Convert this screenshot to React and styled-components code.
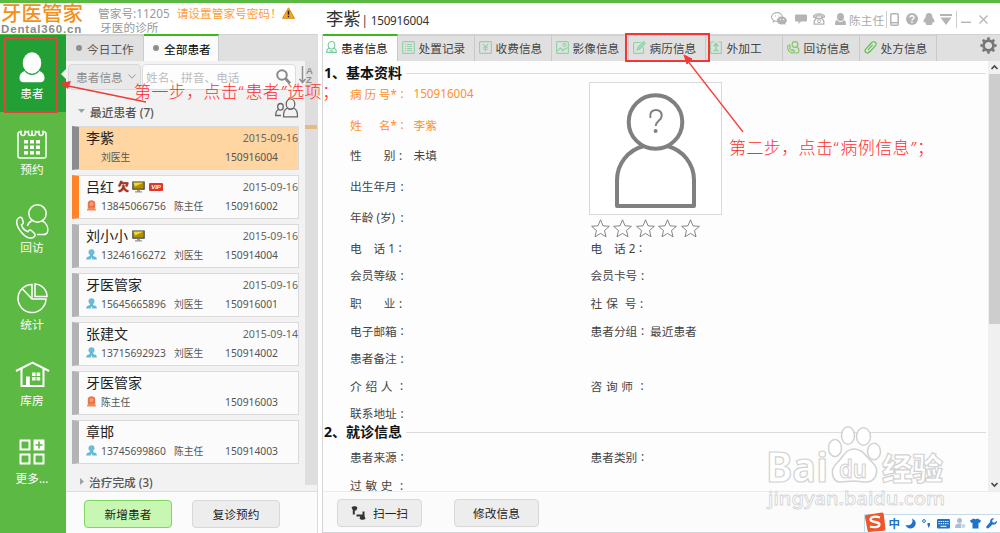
import React from 'react';
import styled, { createGlobalStyle } from 'styled-components';

const sans = `'Noto Sans', 'Noto Sans CJK SC', sans-serif`;

const GlobalStyle = createGlobalStyle`
  * { box-sizing: border-box; }
  body { margin: 0; overflow: hidden; font-family: ${sans}; font-size: 11.7px; color: #444; }
  svg { display: block; flex: none; overflow: visible; }
`;

const Window = styled.div`
  position: relative;
  width: 1000px;
  height: 533px;
  display: flex;
  flex-direction: column;
  overflow: hidden;
  background: #fff;
  border-top: 3px solid #5cb943;
`;

const Header = styled.header`
  height: 31px;
  display: flex;
  flex: none;
`;
const Brand = styled.div`
  width: 98px;
  padding-left: 1px;
  white-space: nowrap;
`;
const BrandName = styled.div`
  height: 20px;
  line-height: 20px;
  font-size: 20.5px;
  font-weight: 500;
  color: #f39019;
`;
const BrandSite = styled.div`
  font: bold 11.5px/12px 'Liberation Sans', sans-serif;
  letter-spacing: 0.85px;
  color: #8b8b8b;
`;
const Account = styled.div`
  width: 228px;
  color: #999;
  line-height: 14px;
  padding-top: 3px;
  white-space: nowrap;
`;
const AccountRow = styled.div`
  display: flex;
  height: 14px;
  padding-left: ${p => p.$indent || 0}px;
`;
const Warning = styled.span`
  margin: 0 0 0 7px;
  color: #ff9c38;
`;
const PatientTitle = styled.div`
  flex: 1;
  display: flex;
  align-items: center;
  color: #333;
  white-space: pre;
`;
const TitleName = styled.span`
  font-size: 17.3px;
  line-height: 30px;
  margin-top: 1px;
`;
const TitleId = styled.span`
  margin: 3px 0 0 1px;
  letter-spacing: -0.2px;
`;
const HeaderTools = styled.div`
  width: 229px;
  display: flex;
  align-items: center;
  color: #aaa;
  padding-top: 1px;
`;
const Tool = styled.span`
  display: flex;
  width: ${p => p.$w}px;
  height: 17px;
  padding-left: ${p => p.$pl || 0}px;
  align-items: center;
  white-space: nowrap;
  border-right: ${p => (p.$line ? '1px solid #ccc' : 'none')};
`;

const Body = styled.div`
  flex: 1;
  display: flex;
  min-height: 0;
`;

const Sidebar = styled.nav`
  width: 66px;
  flex: none;
  background: #5cb943;
  padding-top: 1px;
`;
const NavItem = styled.div`
  position: relative;
  height: 77px;
  padding: ${p => p.$pad}px 2px 0 0;
  display: flex;
  flex-direction: column;
  align-items: center;
  color: #fff;
  background: ${p => (p.$active ? '#22a035' : 'transparent')};
`;
const NavIcon = styled.div`
  height: 36px;
  display: flex;
  align-items: center;
`;
const NavLabel = styled.div`
  line-height: 16px;
`;
const NavPointer = styled.i`
  position: absolute;
  right: 0;
  top: 34px;
  border: 5px solid transparent;
  border-right-color: #f4f4f4;
  border-left: 0;
`;

const ListPanel = styled.aside`
  width: 252px;
  flex: none;
  display: flex;
  flex-direction: column;
  background: #f2f2f2;
  border-right: 1px solid #ddd;
`;
const TabBar = styled.div`
  height: 27px;
  flex: none;
  display: flex;
  background: #e0e0e0;
  border-top: 1px solid #d2d2d2;
`;
const ListTab = styled.div`
  width: ${p => p.$w}px;
  display: flex;
  align-items: center;
  gap: 5px;
  padding-left: ${p => (p.$active ? 9 : 10)}px;
  margin-top: -1px;
  line-height: 14px;
  color: ${p => (p.$active ? '#000' : '#555')};
  background: ${p => (p.$active ? '#fbfbfb' : 'transparent')};
  border-top: 2px solid ${p => (p.$active ? '#3cb81b' : '#d2d2d2')};
  border-right: 1px solid #ccc;
`;
const Dot = styled.i`
  width: 6px;
  height: 6px;
  margin-top: -2px;
  border-radius: 50%;
  background: #8e8e8e;
`;
const ListArea = styled.div`
  flex: 1;
  display: flex;
  min-height: 0;
`;
const ListMain = styled.div`
  flex: 1;
  overflow: hidden;
`;
const ListTrack = styled.div`
  position: relative;
  width: 12px;
  height: 424px;
  background: #dedede;
`;
const TrackMark = styled.i`
  display: block;
  height: 4px;
  margin-top: 64px;
  background: #e8b981;
`;
const SearchRow = styled.div`
  display: flex;
  height: 36px;
  padding: 3px 0 6px 2px;
`;
const FieldSelect = styled.div`
  width: 73px;
  height: 26px;
  display: flex;
  align-items: center;
  justify-content: space-between;
  padding: 0 4px 1px 7px;
  color: #8c8c8c;
  background: #e9e9e9;
  border: 1px solid #d8d8d8;
  border-radius: 4px;
`;
const SearchInput = styled.div`
  width: 154px;
  height: 26px;
  margin-left: 1px;
  display: flex;
  align-items: center;
  justify-content: space-between;
  padding: 0 4px 1px 3px;
  color: #bcbcbc;
  background: #fdfdfd;
  border: 1px solid #dcdcdc;
  border-radius: 4px;
`;
const SortMark = styled.div`
  position: absolute;
  left: -6px;
  top: 5px;
  display: flex;
  color: #8f8f8f;
  font: bold 9.5px/9px 'Liberation Sans', sans-serif;
`;
const GroupTitle = styled.div`
  display: flex;
  align-items: center;
  height: ${p => p.$h}px;
  padding: 0 0 ${p => p.$pb || 0}px ${p => p.$pl}px;
  gap: 5px;
  font-weight: 500;
  font-size: 11.7px;
  color: #555;
`;
const GroupIcon = styled.div`
  margin: -7px 7px 0 auto;
`;
const Cards = styled.div`
  display: flex;
  flex-direction: column;
  gap: 5px;
  padding: 0 6px 0 6px;
`;
const Card = styled.div`
  height: 44px;
  border: 1px solid #dadada;
  border-left: 7px solid ${p => p.$bar};
  background: ${p => (p.$selected ? '#ffd6a1' : '#fbfbfb')};
  padding: 1px 0 0 7px;
`;
const CardTop = styled.div`
  display: flex;
  align-items: center;
  height: 20px;
  gap: 4px;
`;
const CardName = styled.span`
  font-size: 14px;
  line-height: 20px;
  color: #222;
`;
const CardDate = styled.span`
  margin: -1px 0 0 auto;
  font-size: 10.6px;
  color: #666;
`;
const CardBottom = styled.div`
  display: grid;
  grid-template-columns: 15px ${p => (p.$phone ? '73px' : '0')} 1fr 73px;
  align-items: center;
  height: 19px;
  margin-top: -1px;
  font-size: 10.3px;
  color: #555;
`;
const Doctor = styled.span`
  font-size: 9.8px;
  white-space: nowrap;
`;
const ListFooter = styled.div`
  height: 42px;
  flex: none;
  display: flex;
  gap: 20px;
  padding: 8px 0 0 18px;
  background: #fbfbfb;
  border-top: 1px solid #ddd;
`;
const Button = styled.div`
  width: ${p => p.$w}px;
  height: 28px;
  display: flex;
  align-items: center;
  justify-content: center;
  gap: 7px;
  padding-bottom: 1px;
  border-radius: 4px;
  color: #222;
  background: ${p => (p.$primary ? '#c8f7b3' : '#ededed')};
  border: 1px solid ${p => (p.$primary ? '#7fd663' : '#d8d8d8')};
`;

const DetailPanel = styled.main`
  flex: 1;
  display: flex;
  flex-direction: column;
  margin-left: 4px;
  border-left: 1px solid #d6d6d6;
  border-bottom: 1px solid #cfd6d6;
  background: #fdfdfd;
`;
const DetailTab = styled.div`
  width: ${p => (p.$active ? 75 : 77)}px;
  display: flex;
  align-items: center;
  gap: ${p => (p.$active ? 5 : 4)}px;
  padding: 0 0 2px ${p => (p.$active ? 3 : 4)}px;
  margin-top: -1px;
  color: ${p => (p.$active ? '#222' : '#444')};
  background: ${p => (p.$active ? '#fdfdfd' : 'transparent')};
  border-top: 2px solid ${p => (p.$active ? '#3cb81b' : '#d2d2d2')};
  border-right: 1px solid #c9c9c9;
  white-space: nowrap;
`;
const TabText = styled.span`
  margin-left: ${p => (p.$first ? -1 : -0.5)}px;
`;
const Settings = styled.div`
  margin: 2px 3px 0 auto;
`;
const DetailBody = styled.div`
  flex: 1;
  min-height: 0;
  display: flex;
  overflow: hidden;
`;
const Form = styled.div`
  flex: 1;
  overflow: hidden;
`;
const SectionTitle = styled.h2`
  display: flex;
  align-items: center;
  gap: 4px;
  margin: 0 2px ${p => p.$gap}px 1px;
  height: ${p => p.$h}px;
  font-size: 14px;
  line-height: 12px;
  font-weight: 700;
  color: #111;
  white-space: nowrap;
  &::after { content: ''; flex: 1; height: 1px; background: #dcdcdc; }
`;
const SectionText = styled.span`
  margin-top: -1px;
`;
const TopBlock = styled.div`
  display: flex;
  height: 155.6px;
`;
const TopFields = styled.div`
  width: 238px;
`;
const Row = styled.div`
  display: flex;
  height: ${p => p.$h}px;
`;
const Field = styled.div`
  width: ${p => p.$w}px;
  height: 100%;
  padding-left: 27px;
  display: flex;
  align-items: center;
  color: ${p => (p.$accent ? '#ff8f2b' : '#444')};
`;
const FieldLabel = styled.span`
  width: ${p => p.$w}px;
  padding-right: ${p => p.$pad || 0}px;
  display: flex;
  justify-content: space-between;
  white-space: pre;
`;
const Colon = styled.span`
  width: ${p => 63.5 - p.$used}px;
  padding-left: 3.5px;
`;
const PhotoColumn = styled.div`
  padding: 4px 0 0 28px;
`;
const Photo = styled.div`
  width: 133px;
  height: 133px;
  border: 1px solid #d8d8d8;
  background: #fff;
`;
const Stars = styled.div`
  display: flex;
  gap: 3.5px;
  padding: 4px 0 0 1.5px;
`;
const ScrollBar = styled.div`
  width: 12px;
  display: flex;
  flex-direction: column;
  align-items: center;
  background: #f0f0f0;
`;
const ScrollArrow = styled.div`
  height: 13px;
  display: flex;
  align-items: center;
`;
const ScrollThumb = styled.div`
  width: 11px;
  height: 250px;
  margin-bottom: auto;
  background: #cdcdcd;
`;
const DetailFooter = styled.div`
  height: 41px;
  flex: none;
  display: flex;
  gap: 32px;
  padding: 7px 0 0 14px;
  border-top: 1px solid #ececec;
  background: #fbfbfb;
`;

const HighlightBox = styled.div`
  position: absolute;
  left: ${p => p.$x}px;
  top: ${p => p.$y}px;
  width: ${p => p.$w}px;
  height: ${p => p.$h}px;
  border: 2px solid ${p => p.$color};
`;
const Arrows = styled.svg`
  position: absolute;
  left: 0;
  top: -3px;
`;
const Note = styled.div`
  position: absolute;
  left: ${p => p.$x}px;
  top: ${p => p.$y}px;
  font: 300 17px/22px 'Noto Sans CJK SC', sans-serif;
  letter-spacing: 0.4px;
  color: #ff2e2e;
  white-space: nowrap;
`;
const Quote = styled.span`
  display: inline-block;
  width: 7px;
  letter-spacing: 0;
  font-family: 'Noto Sans', sans-serif;
  font-style: ${p => (p.$close ? 'italic' : 'normal')};
`;
const Watermark = styled.svg`
  position: absolute;
  left: 762px;
  top: 419px;
`;
const InputBar = styled.div`
  position: absolute;
  left: 864px;
  top: 511px;
  width: 136px;
  height: 19px;
  display: flex;
  align-items: center;
  padding-left: 23.5px;
  gap: 4.9px;
  background: #fdfeff;
  border: 1px solid #c6dbe8;
  border-right: 0;
  color: #1f74c9;
  font-size: 11.5px;
  line-height: 15px;
  font-weight: 700;
`;
const ImeLogo = styled.svg`
  position: absolute;
  left: -1px;
  top: -3px;
`;

const HeadOutline = ({ size = 11, color = '#74c99a' }) => (
  <svg width={size} height={size * 1.1} viewBox="0 0 11 12" fill="none" stroke={color} strokeWidth="1.1">
    <ellipse cx="5.5" cy="4.2" rx="3.3" ry="3.7" />
    <path d="M3.2 7.2C.8 8 .5 9.5.8 11.3h9.4c.3-1.8 0-3.3-2.4-4.1M3.5 9.3c1.3.8 2.700.8 4 0" />
  </svg>
);

const navIcons = {
  patient: (
    <svg width="26" height="31" viewBox="0 0 26 31" fill="#fff">
      <ellipse cx="13" cy="11" rx="9.3" ry="10.700" />
      <path d="M5.500 19C2 20.200.5 23 .5 26c0 3 1.800 4.300 4 4.300h17c2.200 0 4-1.300 4-4.300 0-3-1.500-5.800-5-7-4 5.200-11 5.200-15 0z" />
    </svg>
  ),
  calendar: (
    <svg width="30" height="31" viewBox="0 0 30 31" fill="none" stroke="#fff" strokeWidth="1.5">
      <path d="M4 4H2.500Q1 4 1 6v22q0 2 2 2h24q2 0 2-2V6q0-2-1.500-2H26" />
      <path d="M4 2.500v4q2 2 4 0v-4M8 4h3.500M11.500 2.500v4q1.800 2 3.500 0v-4M15 2.500v4q1.800 2 3.500 0v-4M18.500 4H22M22 2.500v4q2 2 4 0v-4" />
      <g fill="#fff" stroke="none">
        {[12, 17.5, 23].map(y => [7, 13, 19].map(x => <rect key={`${x}-${y}`} x={x} y={y} width="4" height="3.500" />))}
      </g>
    </svg>
  ),
  callback: (
    <svg width="33" height="35" viewBox="0 0 33 35" fill="none" stroke="#fff" strokeWidth="1.5">
      <circle cx="21.500" cy="9.500" r="8.700" />
      <path d="M15.500 17c-2 1-3.500 2.500-4 5M26.500 17c4 2 6 6.500 5 11-.5 2-2.500 2.500-4.500 2.500h-6" />
      <path d="M2.500 14c1.500-1 3-1 3.700.5l1 3.500c.3 1.500-.3 2.300-1.700 2.800 1 4 3.500 6 6.500 7 1.500-2.300 2.500-2 4-.8l2.500 2.500c1.300 1.500.5 3-1.500 4-3 1.300-7.500-.5-11-4.500C2 24.500.5 21 .7 17.500.8 16 1.500 14.700 2.500 14z" />
    </svg>
  ),
  stats: (
    <svg width="31" height="31" viewBox="0 0 31 31" fill="none" stroke="#fff" strokeWidth="1.500">
      <path d="M15 1.500A14 14 0 1 0 29 16H15zM15 16L5.500 6M18 1v12.500h12C30 7 25 1.500 18 1z" />
    </svg>
  ),
  storage: (
    <svg width="35" height="26" viewBox="0 0 35 26" fill="none" stroke="#fff" strokeWidth="2">
      <path d="M1 10L17.500 1.500 34 10M6.500 8v17h22V8" />
      <path d="M11 15.500h3.800V25H11zM17 11.500h3.600v3.400H17zM21.600 11.500h3.600v3.400h-3.600zM17 16h3.600v3.400H17zM21.600 16h3.600v3.400h-3.600z" fill="#fff" stroke="none" />
    </svg>
  ),
  more: (
    <svg width="26" height="26" viewBox="0 0 26 26" fill="none" stroke="#fff" strokeWidth="2">
      <path d="M1.500 1.500h9v9h-9zM1.500 15.500h9v9h-9zM15.500 15.500h9v9h-9z" />
      <path d="M14.500.500h11v11h-11z" fill="#fff" stroke="none" />
      <path d="M20 2.500v7M16.500 6h7" stroke="#5cb943" strokeWidth="1.600" />
    </svg>
  ),
};

const navItems = [
  ['patient', '患者', 14], ['calendar', '预约', 13], ['callback', '回访', 14],
  ['stats', '统计', 14], ['storage', '库房', 13], ['more', '更多...', 14],
];

const patients = [
  { name: '李紫', date: '2015-09-16', doctor: '刘医生', id: '150916004', bar: '#8c8c8c', selected: true },
  { name: '吕红', date: '2015-09-16', phone: '13845066756', doctor: '陈主任', id: '150916002', bar: '#ff8427', who: 'f', debt: true, tv: true, vip: true },
  { name: '刘小小', date: '2015-09-16', phone: '13246166272', doctor: '刘医生', id: '150914004', who: 'm', tv: true },
  { name: '牙医管家', date: '2015-09-16', phone: '15645665896', doctor: '刘医生', id: '150916001', who: 'm' },
  { name: '张建文', date: '2015-09-14', phone: '13715692923', doctor: '刘医生', id: '150914002', who: 'm' },
  { name: '牙医管家', doctor: '陈主任', id: '150916003', who: 'f' },
  { name: '章邯', phone: '13745699860', doctor: '陈主任', id: '150914003', who: 'm' },
];

const PersonIcon = ({ who }) => {
  if (who === 'm') {
    return (
      <svg width="11" height="11" viewBox="0 0 11 11">
        <circle cx="5.500" cy="3.200" r="3" fill="#6dbcd9" />
        <path d="M4.200 5h2.600l.4 2 3 1.200.8 2.300H6.300L5.500 8l-.8 2.500H0l.8-2.300 3-1.200z" fill="#63b9d8" />
      </svg>
    );
  }
  if (who === 'f') {
    return (
      <svg width="11" height="11" viewBox="0 0 11 11">
        <path d="M1.800 8V3.500C1.800-.8 9.200-.8 9.200 3.500V8z" fill="#e9744a" />
        <path d="M1 10.500c0-2 1-3 4.500-3s4.500 1 4.500 3z" fill="#f08a5e" />
        <circle cx="5.500" cy="4" r="2" fill="#f79a76" />
      </svg>
    );
  }
  return <span />;
};

const DebtBadge = styled.span`
  margin-right: -1px;
  font-size: 11px;
  line-height: 14px;
  font-weight: 900;
  color: #b5301a;
  text-shadow: 0 0 1px #5c1408;
`;
const VipBadge = styled.span`
  width: 14px;
  height: 8px;
  margin-top: -1px;
  border-radius: 1px;
  background: #e0372b;
  color: #fff;
  font: italic bold 6px/8px 'Liberation Sans', sans-serif;
  text-align: center;
`;
const Monitor = () => (
  <svg width="13" height="12" viewBox="0 0 13 12">
    <rect x=".3" y=".5" width="12.400" height="8.200" fill="#333" />
    <path d="M1.300 1.500h10.400v6.200H1.300z" fill="#b08f00" />
    <path d="M1.300 1.500h10.400L3 5.500z" fill="#f0d838" />
    <path d="M5 8.700h3v1.500h2V11.500H3v-1.300h2z" fill="#999" />
  </svg>
);

const g = { width: 13, height: 13, viewBox: '0 0 13 13', fill: 'none', stroke: '#8fd3a9', strokeWidth: 1.100 };
const tabs = [
  ['患者信息', <HeadOutline key="i" />],
  ['处置记录', <svg key="i" {...g}><rect x=".6" y=".6" width="11.800" height="11.800" rx="1" /><path d="M3 3.500h1M5 3.500h5M3 5.500h1M5 5.500h5M3 7.500h1M5 7.500h5M3 9.500h1M5 9.500h5" /></svg>],
  ['收费信息', <svg key="i" {...g}><rect x=".6" y=".6" width="11.800" height="11.800" rx="1" /><path d="M4 2.800l2.500 3 2.500-3M6.500 5.800V10.500M4 6.300h5M4 8.300h5" /></svg>],
  ['影像信息', <svg key="i" {...g}><rect x=".6" y=".6" width="11.800" height="11.800" rx="1" /><path d="M1 10l3.500-3 2.500 2 5-2.500M4.500 7l3 3.500" /><circle cx="8.500" cy="4" r="1.500" /></svg>],
  ['病历信息', <svg key="i" {...g}><path d="M8 1.500H1.500q-.9 0-.9.9v9q0 1 .9 1h8q1 0 1-1V6" /><path d="M4 9l.6-2.300L10.500.8l1.700 1.600-5.900 6z" fill="#a5dcb6" /></svg>],
  ['外加工', <svg key="i" {...g}><path d="M4.500 1H.6v11.400h10.800V1H8.500" /><path d="M6 9V3M3.500 5.300L6 2.500l2.500 2.800M3.500 9.500h5" strokeWidth="1.500" /></svg>],
  ['回访信息', <svg key="i" {...g} stroke="#80c765"><circle cx="8" cy="3.500" r="2.900" /><path d="M10 6c2.500 1.500 2.500 5 1 6H7.500" /><path d="M1 4.500l1.500-.5.800 2-.8 1c.5 1.500 1.500 2 2.500 2.500l1-.7 1.700 1.700c-1 2-3.500 1.700-5.200.2C.8 9 .2 6.500 1 4.500z" /></svg>],
  ['处方信息', <svg key="i" {...g} stroke="#5fc34d" strokeWidth="1.200"><path d="M4 8.800l4.600-5M5.500 11.200C3.500 13.300-.3 11 1.500 8.300L7.300 2C9.500-.6 13.500 1.500 11.700 4.300zM5.500 11.200l-1-.9" /></svg>],
];

const topRows = [
  { parts: ['病', '历', '号*'], w: 47, value: '150916004', accent: true },
  { parts: ['姓', '名*'], w: 47, value: '李紫', accent: true },
  { parts: ['性', '别'], w: 45.5, value: '未填' },
  { parts: ['出生年月'], w: 47 },
  { parts: ['年龄 (岁)'], w: 47 },
];
const pairRows = [
  [{ parts: ['电', '话 1'], w: 45 }, { parts: ['电', '话 2'], w: 45 }],
  [{ parts: ['会员等级'], w: 47 }, { parts: ['会员卡号'], w: 47 }],
  [{ parts: ['职', '业'], w: 45.5 }, { parts: ['社', '保', ' 号'], w: 46 }],
  [{ parts: ['电子邮箱'], w: 47 }, { parts: ['患者分组'], w: 47, value: '最近患者' }],
  [{ parts: ['患者备注'], w: 47 }],
  [{ parts: ['介', '绍', '人'], w: 42.5, pad: 4 }, { parts: ['咨', '询', '师'], w: 42.5, pad: 4 }],
  [{ parts: ['联系地址'], w: 47 }],
];
const visitRows = [
  [{ parts: ['患者来源'], w: 47 }, { parts: ['患者类别'], w: 47 }],
  [{ parts: ['过', '敏', '史'], w: 42.5, pad: 4 }],
];

const FormField = ({ field, width, second }) => {
  const labelWidth = field.w + (field.pad || 0);
  return (
    <Field $w={width} $accent={field.accent}>
      <FieldLabel $w={labelWidth} $pad={field.pad}>
        {field.parts.map(p => <span key={p}>{p}</span>)}
      </FieldLabel>
      <Colon $used={labelWidth + (second ? 4 : 0)}>:</Colon>
      <span>{field.value}</span>
    </Field>
  );
};

const PairRow = ({ pair, h }) => (
  <Row $h={h}>
    {pair.map((f, i) => <FormField key={i} field={f} width={i ? 300 : 240.500} second={i > 0} />)}
  </Row>
);

export default function App() {
  return (
    <Window>
      <GlobalStyle />
      <Header>
        <Brand>
          <BrandName>牙医管家</BrandName>
          <BrandSite>Dental360.cn</BrandSite>
        </Brand>
        <Account>
          <AccountRow>
            管家号:11205<Warning>请设置管家号密码！</Warning>
            <svg width="13" height="12" viewBox="0 0 13 12">
              <path d="M6.500 1.800L12.500 12.300H.5z" fill="#f5a623" stroke="#e08a10" strokeLinejoin="round" />
              <path d="M6.500 4.800v4M6.500 9.800v1.500" stroke="#222" strokeWidth="1.500" />
            </svg>
          </AccountRow>
          <AccountRow $indent={2}>牙医的诊所</AccountRow>
        </Account>
        <PatientTitle>
          <TitleName>李紫</TitleName>
          <TitleId>| 150916004</TitleId>
        </PatientTitle>
        <HeaderTools>
          <Tool $w={24}>
            <svg width="16" height="14" viewBox="0 0 16 14">
              <ellipse cx="6" cy="5" rx="5.400" ry="4.400" fill="#fff" stroke="#b4b4b4" strokeWidth="1.200" />
              <ellipse cx="10.800" cy="8.500" rx="5" ry="4" fill="#b4b4b4" />
              <path d="M2 8.500L1.500 11l2.500-1.500zM13 11.500l1.500 2-.3-3z" fill="#b4b4b4" />
              <path d="M4 4h1M7.500 4h1" stroke="#b4b4b4" />
              <path d="M9 7.500h1M12 7.500h1" stroke="#fff" />
            </svg>
          </Tool>
          <Tool $w={18}>
            <svg width="12" height="10" viewBox="0 0 12 10" fill="#b4b4b4"><path d="M1 .5h10q1 0 1 1v5q0 1-1 1H6L3.500 10V7.500H1q-1 0-1-1v-5q0-1 1-1z" /></svg>
          </Tool>
          <Tool $w={22}>
            <svg width="12" height="12" viewBox="0 0 12 12" fill="none" stroke="#b4b4b4">
              <path d="M.5 4.500V2.500C3 .2 9 .2 11.500 2.500v2h-3v-1.500h-5v1.500z" fill="#ccc" />
              <path d="M3 5.500L1.200 8v3.200h9.600V8L9 5.500z" strokeWidth="1.300" /><circle cx="6" cy="8.200" r="1.500" />
            </svg>
          </Tool>
          <Tool $w={52} $line>
            <svg width="11" height="12" viewBox="0 0 11 12" fill="#b4b4b4"><ellipse cx="5.500" cy="4" rx="3.500" ry="4" /><path d="M2 7C.5 7.500 0 9 0 12h11c0-3-.5-4.500-2-5-1.800 2.600-5.200 2.600-7 0z" /></svg>
            <span>&nbsp;陈主任</span>
          </Tool>
          <Tool $w={19} $pl={3}>
            <svg width="9" height="13" viewBox="0 0 9 13" fill="none" stroke="#b4b4b4" strokeWidth="1.500"><rect x=".8" y=".8" width="7.400" height="11.400" rx="1" /><path d="M1 9.700h7" /></svg>
          </Tool>
          <Tool $w={17}>
            <svg width="12" height="12" viewBox="0 0 12 12"><circle cx="6" cy="6" r="6" fill="#b4b4b4" /><path d="M4 4.600C4 2.200 8 2.200 8 4.500 8 6 6 5.800 6 7.500M6 8.500V10" fill="none" stroke="#fff" strokeWidth="1.400" /></svg>
          </Tool>
          <Tool $w={17}>
            <svg width="12" height="12" viewBox="0 0 12 12" fill="#b4b4b4"><path d="M6 0c2.500 0 3.500 2 3.500 4.500C11 6 12 8 11.300 9.500c-.5.300-1-.5-1.300-1 0 1-.5 1.500-1 2 1 1-.5 1.500-3 1.500s-4-.5-3-1.500c-.5-.5-1-1-1-2-.3.500-.8 1.300-1.300 1C0 8 1 6 2.500 4.500 2.500 2 3.500 0 6 0z" /></svg>
          </Tool>
          <Tool $w={17} $line>
            <svg width="12" height="11" viewBox="0 0 12 11" fill="#b4b4b4"><path d="M0 0h12v2H0zM.5 3.500h11L6 11z" /></svg>
          </Tool>
          <Tool $w={22} $pl={4}>
            <svg width="10" height="12" viewBox="0 0 10 12" stroke="#b4b4b4" strokeWidth="1.400"><path d="M0 9.300h10" /></svg>
          </Tool>
          <Tool $w={10}>
            <svg width="9" height="9" viewBox="0 0 9 9" stroke="#b4b4b4" strokeWidth="1.200"><path d="M.5.5l8 8M8.500.5l-8 8" /></svg>
          </Tool>
        </HeaderTools>
      </Header>

      <Body>
        <Sidebar>
          {navItems.map(([key, label, pad], i) => (
            <NavItem key={key} $active={i === 0} $pad={pad}>
              <NavIcon>{navIcons[key]}</NavIcon>
              <NavLabel>{label}</NavLabel>
              {i === 0 && <NavPointer />}
            </NavItem>
          ))}
        </Sidebar>

        <ListPanel>
          <TabBar>
            <ListTab $w={78}><Dot />今日工作</ListTab>
            <ListTab $w={75} $active><Dot />全部患者</ListTab>
          </TabBar>
          <ListArea>
            <ListMain>
              <SearchRow>
                <FieldSelect>
                  患者信息
                  <svg width="8" height="5" viewBox="0 0 8 5" fill="none" stroke="#999"><path d="M.5.5L4 4.200 7.500.5" /></svg>
                </FieldSelect>
                <SearchInput>
                  姓名、拼音、电话
                  <svg width="15" height="16" viewBox="0 0 15 16" fill="none" stroke="#8a8a8a" strokeWidth="2"><circle cx="6" cy="6" r="4.800" /><path d="M9.500 9.500l4.500 5" strokeWidth="2.800" /></svg>
                </SearchInput>
              </SearchRow>
              <GroupTitle $h={29} $pl={12} $pb={1}>
                <svg width="7" height="4" viewBox="0 0 7 4"><path d="M0 0h7L3.500 4z" fill="#9aa3a8" /></svg>
                最近患者 (7)
                <GroupIcon>
                  <svg width="23" height="20" viewBox="0 0 23 20" fill="none" stroke="#666" strokeWidth="1.300">
                    <ellipse cx="15.500" cy="6" rx="4.300" ry="5.200" />
                    <path d="M12.500 10C9 11.500 8.500 14 8.500 18.800h14c0-4.800-.5-7.300-4-8.800-1.800 1.700-4.200 1.700-6 0z" />
                    <ellipse cx="5.500" cy="8.800" rx="2.800" ry="3.300" />
                    <path d="M3.500 11.500C1 12.500.7 14.500.7 17.500H6" />
                  </svg>
                </GroupIcon>
              </GroupTitle>
              <Cards>
                {patients.map(p => (
                  <Card key={p.id} $bar={p.bar || '#b3b3b3'} $selected={p.selected}>
                    <CardTop>
                      <CardName>{p.name}</CardName>
                      {p.debt && <DebtBadge>欠</DebtBadge>}
                      {p.tv && <Monitor />}
                      {p.vip && <VipBadge>VIP</VipBadge>}
                      <CardDate>{p.date}</CardDate>
                    </CardTop>
                    <CardBottom $phone={p.phone}>
                      <PersonIcon who={p.who} />
                      <span>{p.phone}</span>
                      <Doctor>{p.doctor}</Doctor>
                      <span>{p.id}</span>
                    </CardBottom>
                  </Card>
                ))}
              </Cards>
              <GroupTitle $h={34} $pl={14}>
                <svg width="4" height="7" viewBox="0 0 4 7"><path d="M0 0v7l4-3.500z" fill="#9aa3a8" /></svg>
                治疗完成 (3)
              </GroupTitle>
            </ListMain>
            <ListTrack>
              <TrackMark />
              <SortMark>
                <svg width="7" height="18" viewBox="0 0 7 18" fill="none" stroke="#8f8f8f" strokeWidth="1.500"><path d="M3.500 0v16.500M.5 13l3 3.500 3-3.500" /></svg>
                <span>A<br />Z</span>
              </SortMark>
            </ListTrack>
          </ListArea>
          <ListFooter>
            <Button $w={88} $primary>新增患者</Button>
            <Button $w={88}>复诊预约</Button>
          </ListFooter>
        </ListPanel>

        <DetailPanel>
          <TabBar>
            {tabs.map(([label, icon], i) => (
              <DetailTab key={label} $active={i === 0}>{icon}<TabText $first={i === 0}>{label}</TabText></DetailTab>
            ))}
            <Settings>
              <svg width="17" height="17" viewBox="-8.500 -8.500 17 17">
                <circle r="4.900" fill="none" stroke="#777" strokeWidth="2.600" />
                {[0, 45, 90, 135, 180, 225, 270, 315].map(a => <path key={a} d="M-1.700-5.800L-1-8.200h2l.7 2.400z" fill="#777" transform={`rotate(${a})`} />)}
              </svg>
            </Settings>
          </TabBar>
          <DetailBody>
            <Form>
              <SectionTitle $h={24} $gap={-7}><SectionText>1、基本资料</SectionText></SectionTitle>
              <TopBlock>
                <TopFields>
                  {topRows.map(f => <Row key={f.parts[0]} $h={30.8}><FormField field={f} width={238} /></Row>)}
                </TopFields>
                <PhotoColumn>
                  <Photo>
                    <svg width="131" height="131" viewBox="0 0 131 131" fill="none" stroke="#808080" strokeWidth="4">
                      <path d="M54 63C38 67 27 81 27 97v26h77V97c0-16-11-30-27-34" strokeLinejoin="round" />
                      <circle cx="65.500" cy="39" r="26.800" />
                      <path d="M60.500 35c-1-5 1-8 5.200-8 4 0 6 2.500 6 5.700 0 5-6 5.300-6 10.300" strokeWidth="2" />
                      <circle cx="65.600" cy="48" r="2" fill="#808080" stroke="none" />
                    </svg>
                  </Photo>
                  <Stars>
                    {[0, 1, 2, 3, 4].map(i => (
                      <svg key={i} width="19" height="19" viewBox="0 0 19 19" fill="#fff" stroke="#777" strokeWidth=".9">
                        <path d="M9.500.8l2.500 6 6.400.5-4.900 4.200 1.500 6.300-5.500-3.400L4 17.800l1.500-6.300L.6 7.300 7 6.800z" />
                      </svg>
                    ))}
                  </Stars>
                </PhotoColumn>
              </TopBlock>
              {pairRows.map((p, i) => <PairRow key={i} pair={p} h={27.6} />)}
              <SectionTitle $h={12} $gap={3}><SectionText>2、就诊信息</SectionText></SectionTitle>
              {visitRows.map((p, i) => <PairRow key={i} pair={p} h={28.5} />)}
            </Form>
            <ScrollBar>
              <ScrollArrow><svg width="7" height="5" viewBox="0 0 7 5" fill="none" stroke="#444" strokeWidth="1.600"><path d="M.5 4l3-3 3 3" /></svg></ScrollArrow>
              <ScrollThumb />
              <ScrollArrow><svg width="7" height="5" viewBox="0 0 7 5" fill="none" stroke="#444" strokeWidth="1.600"><path d="M.5 1l3 3 3-3" /></svg></ScrollArrow>
            </ScrollBar>
          </DetailBody>
          <DetailFooter>
            <Button $w={85}>
              <svg width="15" height="14" viewBox="0 0 15 14" fill="#333">
                <path d="M.5 1.500C2-.3 5-.3 6.500 1.500L5.300 4.500H3.800v4H1.800V4zM14.500 12.500c-1.500 1.800-4.500 1.800-6 0l.8-2H5.500v-2h6V5.500h2V10z" />
              </svg>
              扫一扫
            </Button>
            <Button $w={85}>修改信息</Button>
          </DetailFooter>
        </DetailPanel>
      </Body>

      <Watermark width="190" height="90" viewBox="0 0 190 90">
        <g fill="#fff" stroke="#d2d2d2" strokeWidth="1.200" fontFamily="'Noto Sans', 'Noto Sans CJK SC', sans-serif">
          <g strokeWidth="1.500">
            <ellipse cx="73" cy="26" rx="6.500" ry="8.500" />
            <ellipse cx="86" cy="13.500" rx="6.500" ry="8.700" />
            <ellipse cx="101.500" cy="14.500" rx="7" ry="8.700" />
            <ellipse cx="112" cy="29.500" rx="6.500" ry="8.300" />
            <path d="M92 27c-9 0-11 9-17 14-8 7-5 20 5 19 5-.5 7-1 12-1s8 1.500 13 1c10-1 13-13 5-20-6-5-9-13-18-13z" />
          </g>
          <text x="4" y="60" fontSize="41" fontWeight="700" textLength="62" lengthAdjust="spacingAndGlyphs">Bai</text>
          <text x="77" y="56" fontSize="25" fontWeight="600" textLength="28" lengthAdjust="spacingAndGlyphs">du</text>
          <text x="120" y="58" fontSize="31" fontWeight="800" textLength="61" lengthAdjust="spacingAndGlyphs">经验</text>
          <text x="6" y="83" fontSize="18.500" fontWeight="500" stroke="#d4d4d4" strokeWidth=".8" textLength="177" lengthAdjust="spacingAndGlyphs">jingyan.baidu.com</text>
        </g>
      </Watermark>

      <HighlightBox $x={4} $y={34} $w={54} $h={76} $color="#e0443a" />
      <HighlightBox $x={625} $y={30} $w={85} $h={29} $color="#f53535" />
      <Arrows width="1000" height="170">
        <path d="M146 102L61 84.500" stroke="#ee3b36" strokeWidth="1.400" />
        <path d="M60 83l11-2-3 8z" fill="#ee3b36" />
        <path d="M743 132L687 60" stroke="#f8413c" strokeWidth="1.300" />
        <path d="M684 55l8 4-5 5z" fill="#f23a35" stroke="#f23a35" />
      </Arrows>
      <Note $x={134} $y={77}>第一步，点击<Quote>“</Quote>患者<Quote $close>”</Quote>选项；</Note>
      <Note $x={729} $y={133}>第二步，点击<Quote>“</Quote>病例信息<Quote $close>”</Quote>；</Note>

      <InputBar>
        <ImeLogo width="22" height="20" viewBox="0 0 22 20">
          <path d="M2 3L18 .5q1.500 0 1.700 1.500L21.500 17q0 1.500-1.500 1.700L5 20q-1.300 0-1.500-1.500L1 5q-.3-1.700 1-2z" fill="#f0562b" />
          <path d="M16 5.500C11 3.500 6.500 5 6.500 7.500c0 3.500 9 1.500 9 5 0 2.800-5.500 3.300-9.500 2" fill="none" stroke="#fff" strokeWidth="2.300" />
        </ImeLogo>
        中
        <svg width="11" height="11" viewBox="0 0 11 11" fill="#1f74c9"><path d="M7 .5C9 5 5 8.500.5 7c1 3 5 4.500 8 2.500s3.500-7-1.500-9z" /></svg>
        <svg width="11" height="11" viewBox="0 0 11 11"><circle cx="3" cy="3" r="1.400" fill="none" stroke="#1f74c9" /><path d="M6.500 5h2.500v2.500L7 10V7.500h-.5z" fill="#1f74c9" /></svg>
        <svg width="13" height="10" viewBox="0 0 13 10"><rect width="13" height="9.500" rx="1" fill="#1f74c9" /><path d="M1.500 2.500h10M1.500 4.700h10" stroke="#fff" strokeDasharray="1.300 .9" /><path d="M3.500 7.300h6" stroke="#fff" /></svg>
        <svg width="11" height="11" viewBox="0 0 11 11" fill="#a9bdd6"><circle cx="4.500" cy="2.600" r="2.500" /><path d="M0 10c0-3 1-4.500 4.500-4.500S8.500 7 8.500 10z" /><circle cx="8.500" cy="8" r="2.300" fill="#c9d4e2" stroke="#fff" strokeWidth=".7" /></svg>
        <svg width="11" height="11" viewBox="0 0 11 11" fill="#1f74c9"><path d="M3.500.5q2 1.500 4 0L11 2.500 9.800 5l-1.300-.5V10.500h-6V4.500L1.200 5 0 2.500z" /></svg>
        <svg width="11" height="11" viewBox="0 0 11 11" fill="#1f74c9"><path d="M10.700 2.700L8.500 4.700 6.500 4.300 6.200 2.300 8.300.4C6 -.4 3.700 1.300 4.200 4L.5 8.200c-1 1.500 1 3 2.300 1.800L6.500 6.500c2.800.8 5-1.500 4.200-3.800z" /></svg>
      </InputBar>
    </Window>
  );
}
